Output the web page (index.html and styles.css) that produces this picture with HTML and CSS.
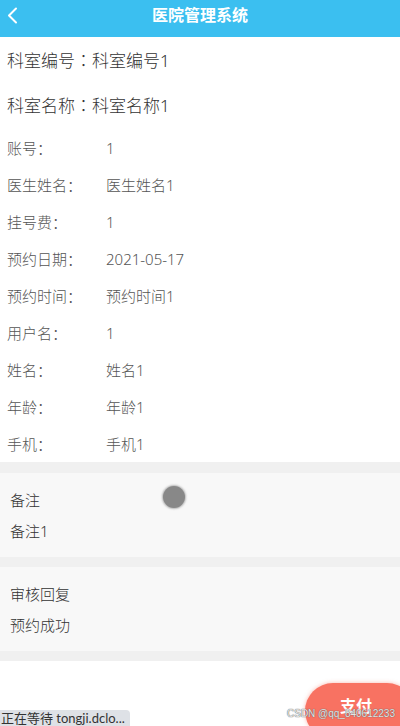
FILE: index.html
```html
<!DOCTYPE html>
<html lang="zh-CN">
<head>
<meta charset="utf-8">
<title>医院管理系统</title>
<link rel="stylesheet" href="styles.css">
</head>
<body>
<div class="page">
  <header class="topbar">
    <span class="back">
      <svg width="12" height="17" viewBox="0 0 12 17"><path d="M10 1.5 L3 8.5 L10 15.5" fill="none" stroke="#fff" stroke-width="2" stroke-linecap="round" stroke-linejoin="round"/></svg>
    </span>
    <h1 class="title">医院管理系统</h1>
  </header>

  <div class="big-row">科室编号<span class="colon">：</span>科室编号1</div>
  <div class="big-row">科室名称<span class="colon">：</span>科室名称1</div>

  <div class="rows">
    <div class="row"><span class="label">账号<span class="colon">：</span></span><span class="value">1</span></div>
    <div class="row"><span class="label">医生姓名<span class="colon">：</span></span><span class="value">医生姓名1</span></div>
    <div class="row"><span class="label">挂号费<span class="colon">：</span></span><span class="value">1</span></div>
    <div class="row"><span class="label">预约日期<span class="colon">：</span></span><span class="value">2021-05-17</span></div>
    <div class="row"><span class="label">预约时间<span class="colon">：</span></span><span class="value">预约时间1</span></div>
    <div class="row"><span class="label">用户名<span class="colon">：</span></span><span class="value">1</span></div>
    <div class="row"><span class="label">姓名<span class="colon">：</span></span><span class="value">姓名1</span></div>
    <div class="row"><span class="label">年龄<span class="colon">：</span></span><span class="value">年龄1</span></div>
    <div class="row"><span class="label">手机<span class="colon">：</span></span><span class="value">手机1</span></div>
  </div>

  <div class="band"></div>
  <div class="panel">
    <div class="panel-line">备注</div>
    <div class="panel-line">备注1</div>
    <span class="dot"></span>
  </div>
  <div class="band"></div>
  <div class="panel">
    <div class="panel-line">审核回复</div>
    <div class="panel-line">预约成功</div>
  </div>
  <div class="band band-tall"></div>

  <button class="pay">支付</button>
  <div class="watermark">CSDN @qq_840612233</div>
  <div class="status">正在等待 tongji.dclo...</div>
</div>
</body>
</html>
```

FILE: styles.css
```css
* { box-sizing: border-box; }
html, body { margin: 0; padding: 0; background: #fff; }
body {
  font-family: "Microsoft YaHei", "Noto Sans", "Noto Sans CJK SC", sans-serif;
  color: #333;
}
.page {
  position: relative;
  width: 400px;
  height: 726px;
  overflow: hidden;
  background: #fff;
}
.topbar {
  position: relative;
  height: 37px;
  background: #3bbff0;
  display: flex;
  justify-content: center;
  align-items: flex-start;
}
.back {
  position: absolute;
  left: 6px;
  top: 7px;
  display: flex;
}
.title {
  margin: 0;
  padding-top: 4px;
  font-size: 16px;
  line-height: 23px;
  font-weight: bold;
  color: #fff;
}
.colon {
  font-family: "Noto Sans CJK JP", "Noto Sans CJK SC", sans-serif;
}
.big-row {
  height: 45px;
  padding-left: 7px;
  display: flex;
  align-items: center;
  font-size: 17px;
  font-weight: 300;
  color: #333;
}
.rows { padding-top: 2px; }
.row {
  height: 37px;
  display: flex;
  align-items: center;
  padding-left: 7px;
  font-size: 15px;
  font-weight: 300;
  color: #555;
}
.label { width: 99px; }
.band {
  height: 11px;
  background: #f0f0f0;
}
.panel + .band { height: 10px; }
.band-tall { height: 26px; }
.panel {
  position: relative;
  background: #f8f8f8;
  padding: 11px 10px;
}
.panel-line {
  height: 31px;
  display: flex;
  align-items: center;
  font-size: 15px;
  font-weight: 300;
  color: #333;
}
.dot {
  position: absolute;
  left: 163px;
  top: 13px;
  width: 22px;
  height: 22px;
  border-radius: 50%;
  background: #888;
  box-shadow: 0 0 2px 1px rgba(136,136,136,0.6);
}
.pay {
  position: absolute;
  left: 305px;
  top: 683px;
  width: 110px;
  height: 56px;
  border: none;
  border-radius: 28px;
  background: #f87262;
  color: #fff;
  font-family: inherit;
  font-size: 16px;
  font-weight: bold;
  padding: 0 0 12px 35px;
  text-align: left;
  box-shadow: 0 0 4px rgba(248,114,98,0.5);
}
.watermark {
  position: absolute;
  right: 5px;
  top: 707px;
  font-family: "Liberation Sans", Arial, sans-serif;
  font-size: 10px;
  line-height: 13px;
  white-space: nowrap;
  color: rgba(255,255,255,0.85);
  text-shadow: 0 0 1px #555, 0 0 1px #777;
}
.status {
  position: absolute;
  left: 0;
  top: 710px;
  width: 130px;
  height: 18px;
  padding-left: 1px;
  background: #dee1e6;
  border-top-right-radius: 4px;
  font-family: "Lato", "Noto Sans CJK SC", sans-serif;
  font-size: 13px;
  line-height: 17px;
  color: #333;
  white-space: nowrap;
  overflow: hidden;
}
```
